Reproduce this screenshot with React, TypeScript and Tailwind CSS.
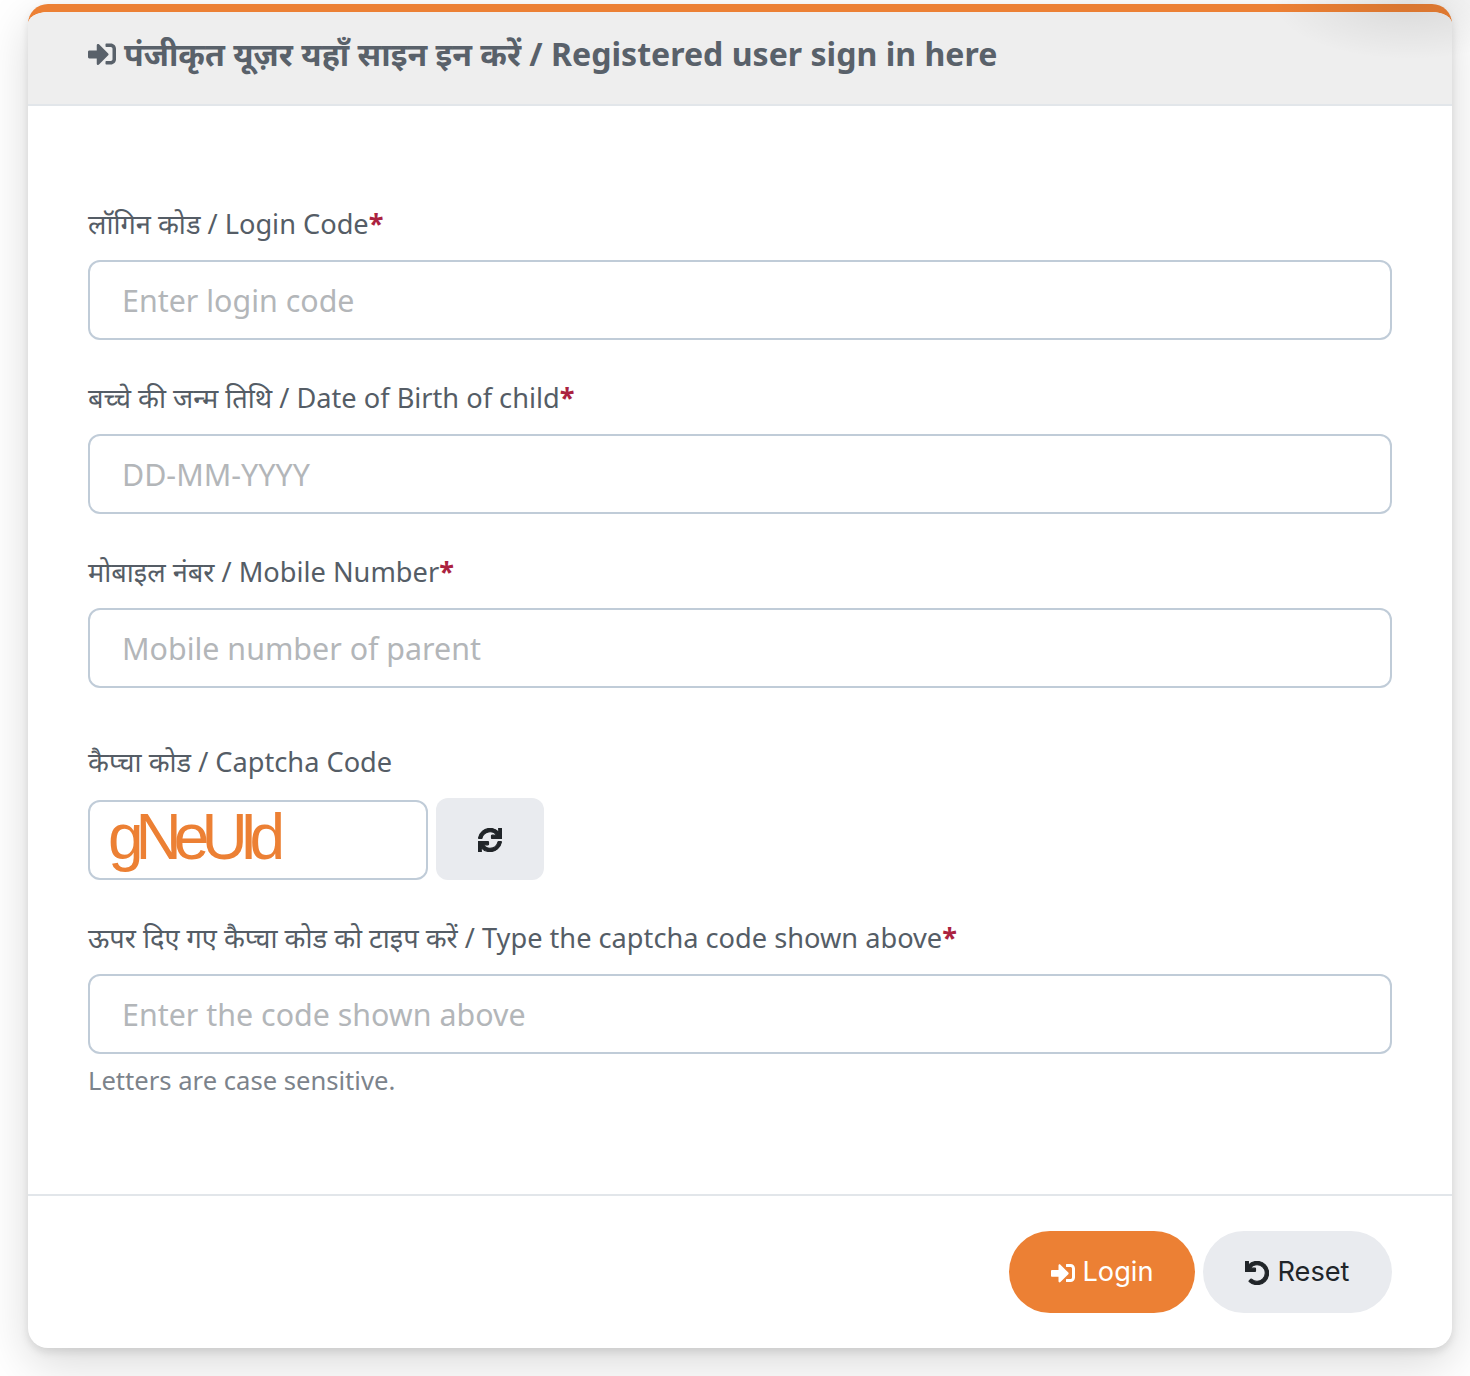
import React from 'react';
import { FaSignInAlt, FaSync, FaUndo } from 'react-icons/fa';

const fontStack = "font-['Noto_Sans','Noto_Sans_Devanagari','Lohit_Devanagari',sans-serif]";

const Label: React.FC<{ text: string; required?: boolean }> = ({ text, required }) => (
  <label className="block text-[27.2px] leading-[40px] text-[#555d66]">
    {text}
    {required && <span className="font-bold text-[#ab2240]">*</span>}
  </label>
);

const Field: React.FC<{ placeholder: string }> = ({ placeholder }) => (
  <input
    placeholder={placeholder}
    className="block w-full h-[80px] px-[32px] bg-white border-2 border-[#c0ccd8] rounded-[12px] text-[30.4px] outline-none placeholder:text-[#b3b6b9]"
  />
);

const App: React.FC = () => {
  return (
    <div className={`relative w-[1470px] h-[1376px] bg-white overflow-hidden px-[28px] pt-[4px] ${fontStack}`}>
      <div className="relative w-[1424px] h-[1344px] flex flex-col bg-white border-t-8 border-[#ec8034] rounded-[20px] overflow-hidden shadow-[0_4px_8px_rgba(0,0,0,0.1),0_16px_48px_rgba(0,0,0,0.15)]">
        {/* Header */}
        <div className="h-[94px] shrink-0 flex items-center gap-[8px] px-[60px] pb-[8px] bg-[#eeeeee] border-b-2 border-[#e2e6ea] font-bold text-[#59616a]">
          <FaSignInAlt className="w-[28px] h-[28px]" />
          <h1 className="text-[32.1px] leading-[48px]">पंजीकृत यूज़र यहाँ साइन इन करें / Registered user sign in here</h1>
        </div>

        {/* Form */}
        <div className="flex-1 px-[60px] pt-[98px]">
          <Label text="लॉगिन कोड / Login Code" required />
          <div className="mt-[16px]"><Field placeholder="Enter login code" /></div>

          <div className="mt-[38px]"><Label text="बच्चे की जन्म तिथि / Date of Birth of child" required /></div>
          <div className="mt-[16px]"><Field placeholder="DD-MM-YYYY" /></div>

          <div className="mt-[38px]"><Label text="मोबाइल नंबर / Mobile Number" required /></div>
          <div className="mt-[16px]"><Field placeholder="Mobile number of parent" /></div>

          <div className="mt-[54px]"><Label text="कैप्चा कोड / Captcha Code" /></div>
          <div className="mt-[16px] flex items-end gap-[8px]">
            <div className="w-[340px] h-[80px] flex items-center pl-[18px] pb-[6px] bg-white border-2 border-[#c0ccd8] rounded-[12px] overflow-hidden">
              <span className="font-['Liberation_Sans',sans-serif] text-[#ec8034] text-[64px] leading-none tracking-[-8px]">gNeUId</span>
            </div>
            <button className="w-[108px] h-[82px] flex items-center justify-center bg-[#e9ebef] rounded-[12px] text-[#212529]">
              <FaSync className="w-[24px] h-[24px] mt-[2px]" stroke="currentColor" strokeWidth={24} />
            </button>
          </div>

          <div className="mt-[38px]"><Label text="ऊपर दिए गए कैप्चा कोड को टाइप करें / Type the captcha code shown above" required /></div>
          <div className="mt-[16px]"><Field placeholder="Enter the code shown above" /></div>
          <p className="mt-[8px] text-[25.6px] leading-[38px] text-[#7c838b]">Letters are case sensitive.</p>
        </div>

        {/* Footer */}
        <div className="h-[154px] shrink-0 flex justify-end items-start gap-[8px] px-[60px] pt-[35px] border-t-2 border-[#e2e6ea]">
          <button className="w-[186px] h-[82px] flex items-center justify-center gap-[8px] pt-[1px] bg-[#ec8034] rounded-full font-['Inter',sans-serif] text-[27.2px] text-white">
            <FaSignInAlt className="w-[24px] h-[24px]" />
            Login
          </button>
          <button className="w-[189px] h-[82px] flex items-center justify-center gap-[8px] pt-[1px] bg-[#e9ebef] rounded-full font-['Inter',sans-serif] text-[27.2px] text-[#212529]">
            <FaUndo className="w-[24px] h-[24px]" stroke="currentColor" strokeWidth={24} />
            Reset
          </button>
        </div>
      </div>
      {/* soft shade in the top right corner */}
      <div className="absolute top-0 right-0 w-[200px] h-[60px] bg-[radial-gradient(ellipse_at_70%_0%,rgba(0,0,0,0.09),transparent_70%)]" />
    </div>
  );
};

export default App;
